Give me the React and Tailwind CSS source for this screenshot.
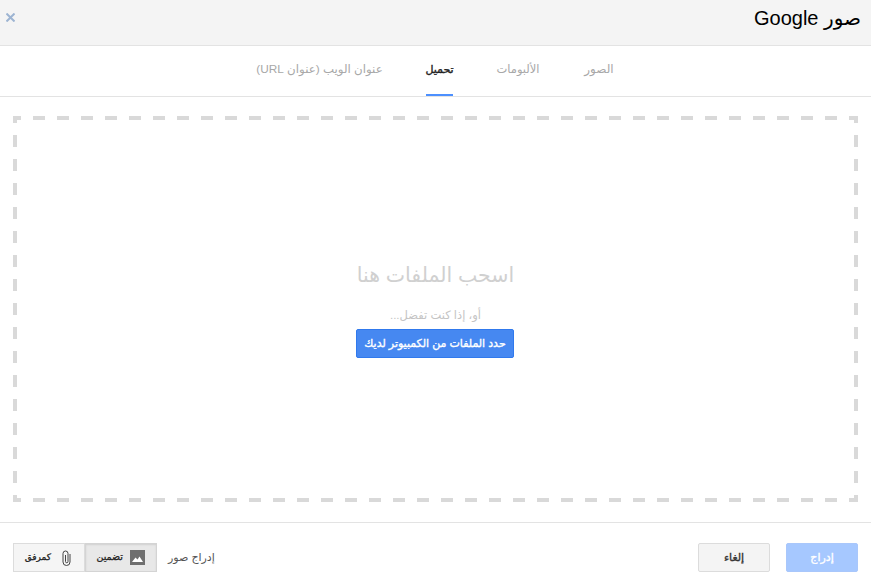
import React from "react";

function Dashes() {
  return (
    <svg className="absolute inset-0 w-full h-full" viewBox="0 0 845 386" fill="none" stroke="#d9d9d9" strokeWidth="4">
      <path d="M0 2H845M0 384H845" strokeDasharray="12 12" strokeDashoffset="-20" />
      <path d="M2 0V386M843 0V386" strokeDasharray="12 12" strokeDashoffset="-19" />
    </svg>
  );
}

export default function App() {
  return (
    <div dir="rtl" className="w-[871px] h-[587px] bg-white flex flex-col overflow-hidden font-['Liberation_Sans','DejaVu_Sans',sans-serif]">
      <header className="h-[46px] shrink-0 bg-[#f4f4f4] border-b border-[#e3e3e3] flex items-start justify-between pr-[10px] pl-[6px]">
        <h1 className="text-[20px] leading-[24px] mt-[6px] text-black font-normal">صور Google</h1>
        <svg className="mt-[13px]" width="9" height="9" viewBox="0 0 9 9" stroke="#9db4d2" strokeWidth="2" fill="none"><path d="M0.5 0.5L8.5 8.5M8.5 0.5L0.5 8.5" /></svg>
      </header>

      <nav className="h-[51px] shrink-0 border-b border-[#e3e3e3] flex justify-center gap-[44px] text-[12px] text-[#a8a8a8]">
        <div className="w-[30px] flex justify-center pt-[15px] leading-[16px] whitespace-nowrap">الصور</div>
        <div className="w-[42px] mr-px flex justify-center pt-[15px] leading-[16px] whitespace-nowrap text-[11.5px]">الألبومات</div>
        <div className="w-[27px] flex justify-center pt-[15px] leading-[16px] whitespace-nowrap text-[11px] [-webkit-text-stroke:0.35px_#222] text-[#222] border-b-2 border-[#4d90fe]">تحميل</div>
        <div className="w-[125px] flex justify-center pt-[15px] leading-[16px] whitespace-nowrap text-[11.8px]">عنوان الويب (عنوان URL)</div>
      </nav>

      <main className="flex-1 px-[13px] pt-[19px] pb-[20px] min-h-0">
        <div className="relative h-full flex flex-col items-center">
          <Dashes />
          <p className="mt-[145px] text-[20.5px] leading-[28px] text-[#d0d0d0]">اسحب الملفات هنا</p>
          <p className="mt-[19px] text-[11.5px] leading-[14px] text-[#c4c4c4]">أو، إذا كنت تفضل...</p>
          <button className="mt-[7px] mr-px relative h-[29px] w-[158px] rounded-[2px] border border-[#3079ed] bg-[#4688f1] text-white text-[11px] [-webkit-text-stroke:0.35px_#fff] whitespace-nowrap">حدد الملفات من الكمبيوتر لديك</button>
        </div>
      </main>

      <footer className="h-[65px] shrink-0 border-t border-[#e3e3e3] flex items-start justify-between px-[13px] pt-[20px]">
        <div className="flex gap-[16px]">
          <button className="h-[29px] w-[72px] rounded-[2px] border border-[#a9c7fb] bg-[#a6c8ff] text-white text-[11px] [-webkit-text-stroke:0.35px_#fff]">إدراج</button>
          <button className="h-[29px] w-[72px] rounded-[2px] border border-[#dcdcdc] bg-[#f4f4f4] text-[#333] text-[11px] [-webkit-text-stroke:0.35px_#333]">إلغاء</button>
        </div>
        <div className="flex items-center h-[29px]">
          <span className="text-[11px] text-[#555] ml-[11px]">إدراج صور</span>
          <button className="h-[29px] w-[72px] flex items-center pr-[11px] gap-[7px] border border-[#d4d4d4] bg-[#e8e8e8] shadow-[inset_0_1px_2px_rgba(0,0,0,0.1)] text-[#222] text-[9.5px] [-webkit-text-stroke:0.3px_#222]">
            <svg width="15" height="15" viewBox="0 0 15 15"><rect width="15" height="15" fill="#6f6f6f" /><path d="M2 12L5.5 7.5L7.5 9.5L9.5 6.5L13 12Z" fill="#fff" /></svg>
            <span>تضمين</span>
          </button>
          <button className="h-[29px] w-[72px] flex items-center pr-[13px] gap-[11px] border border-[#dcdcdc] bg-[#f5f5f5] text-[#222] text-[9px] [-webkit-text-stroke:0.3px_#222]">
            <svg width="9" height="16" viewBox="0 0 9 16" fill="none" stroke="#444" strokeWidth="1"><path d="M8 4V12A3.5 3.5 0 0 1 1 12V3.5A2.5 2.5 0 0 1 6 3.5V11.5A1 1 0 0 1 3.5 11.5V5" /></svg>
            <span>كمرفق</span>
          </button>
        </div>
      </footer>
    </div>
  );
}
